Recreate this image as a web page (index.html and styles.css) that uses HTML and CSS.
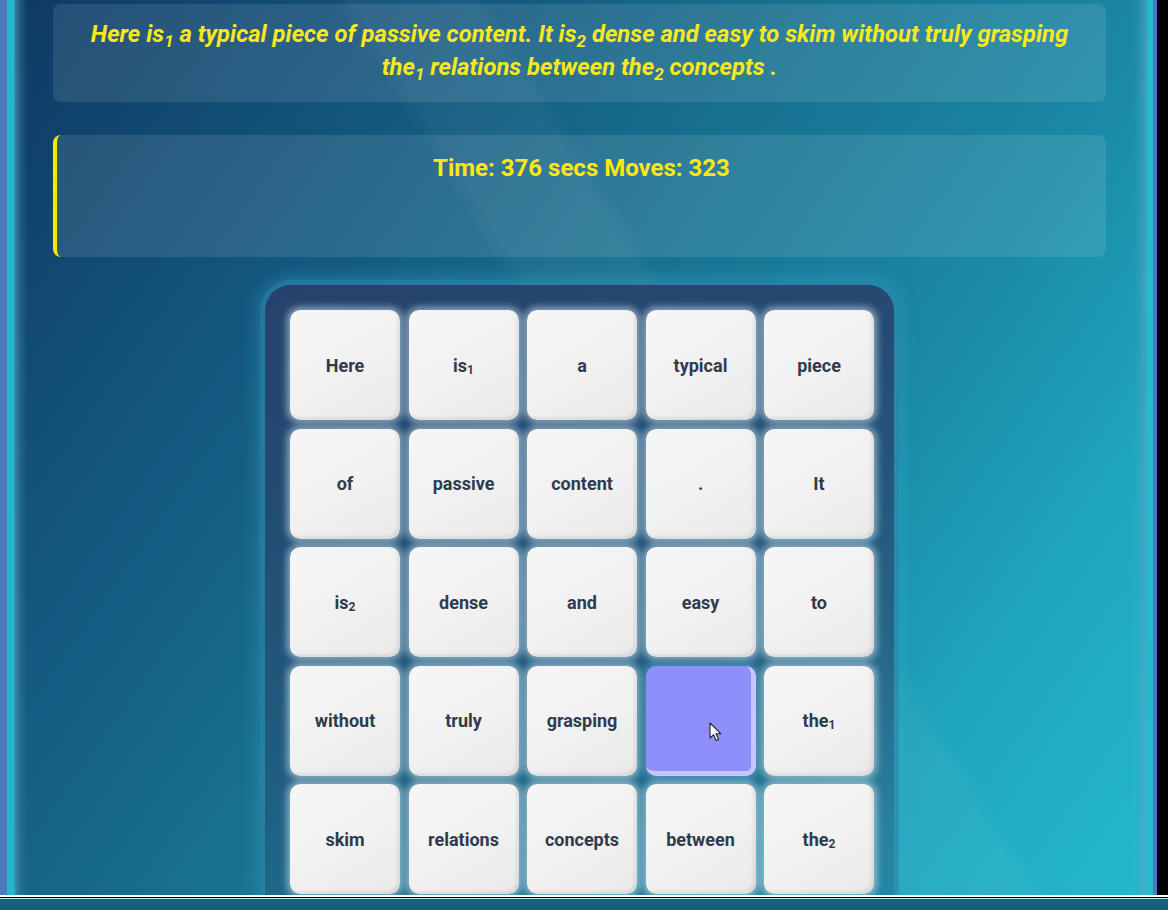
FILE: index.html
```html
<!DOCTYPE html>
<html lang="en">
<head>
<meta charset="utf-8">
<title>Sliding Sentence Puzzle</title>
<link rel="stylesheet" href="styles.css">
</head>
<body>
<div class="frame">
  <div class="window">
    <div class="viewport">
      <div class="content">
        <div class="card sentence">
          <span class="line">Here is<sub>1</sub> a typical piece of passive content. It is<sub>2</sub> dense and easy to skim without truly grasping</span>
          <span class="line">the<sub>1</sub> relations between the<sub>2</sub> concepts .</span>
        </div>
        <div class="card stats">
          <div class="stats-line">Time: 376 secs Moves: 323</div>
        </div>
        <div class="board-wrap">
          <div class="board">
            <div class="tile"><span>Here</span></div>
            <div class="tile"><span>is<sub>1</sub></span></div>
            <div class="tile"><span>a</span></div>
            <div class="tile"><span>typical</span></div>
            <div class="tile"><span>piece</span></div>
            <div class="tile"><span>of</span></div>
            <div class="tile"><span>passive</span></div>
            <div class="tile"><span>content</span></div>
            <div class="tile"><span>.</span></div>
            <div class="tile"><span>It</span></div>
            <div class="tile"><span>is<sub>2</sub></span></div>
            <div class="tile"><span>dense</span></div>
            <div class="tile"><span>and</span></div>
            <div class="tile"><span>easy</span></div>
            <div class="tile"><span>to</span></div>
            <div class="tile"><span>without</span></div>
            <div class="tile"><span>truly</span></div>
            <div class="tile"><span>grasping</span></div>
            <div class="tile empty">
              <svg class="cursor" width="13" height="20" viewBox="0 0 13 20"><path d="M1 1 L1 16 L4.6 12.6 L7.2 18.6 L9.6 17.6 L7 11.8 L12 11.8 Z" fill="#fff" stroke="#222" stroke-width="1.1" stroke-linejoin="round"/></svg>
            </div>
            <div class="tile"><span>the<sub>1</sub></span></div>
            <div class="tile"><span>skim</span></div>
            <div class="tile"><span>relations</span></div>
            <div class="tile"><span>concepts</span></div>
            <div class="tile"><span>between</span></div>
            <div class="tile"><span>the<sub>2</sub></span></div>
          </div>
        </div>
      </div>
    </div>
    <div class="blackbar"></div>
  </div>
  <div class="taskbar"></div>
</div>
</body>
</html>
```
FILE: styles.css
```css
* { box-sizing: border-box; }
html, body { margin: 0; padding: 0; }
body {
  width: 1168px;
  height: 910px;
  overflow: hidden;
  font-family: Roboto, "Liberation Sans", Arial, sans-serif;
  background: #000;
}
.frame {
  display: flex;
  flex-direction: column;
  height: 910px;
}
.window {
  flex: 1;
  display: flex;
  min-height: 0;
}
.viewport {
  flex: 1;
  overflow: hidden;
  border-left: 7px solid #4f78be;
  border-right: 4px solid #5672c0;
  background:
    linear-gradient(to right, #20b8cc 0, #20b8cc 7px, rgba(70,150,180,0.75) 8px, rgba(60,130,165,0.35) 14px, rgba(60,130,165,0) 21px),
    linear-gradient(to left, #22bccf 0, #22bccf 5px, rgba(80,170,200,0.7) 6px, rgba(80,170,200,0.3) 12px, rgba(80,170,200,0) 20px),
    linear-gradient(58deg, rgba(255,255,255,0) 0%, rgba(255,255,255,0) 52%, rgba(255,255,255,0.04) 53%, rgba(255,255,255,0.04) 60%, rgba(255,255,255,0) 61%, rgba(255,255,255,0) 100%),
    linear-gradient(125deg, #0e3963 0%, #145a80 28%, #18708f 45%, #1a88a4 65%, #1fa6bd 82%, #24b9cc 100%);
}
.content {
  padding: 4px 47px 0 46px;
}
.card {
  background: rgba(255,255,255,0.1);
  border-radius: 8px;
}
.sentence {
  display: flex;
  flex-direction: column;
  align-items: center;
  padding: 14px 20px 18px;
  color: #f8e81c;
  font-size: 23.8px;
  font-weight: 700;
  font-style: italic;
  line-height: 33px;
  text-align: center;
}
.line {
  white-space: nowrap;
}
.sentence sub {
  font-size: 17px;
  line-height: 0;
  vertical-align: baseline;
  position: relative;
  top: 5px;
}
.stats {
  margin-top: 33px;
  height: 122px;
  border-left: 4px solid #ffe600;
  padding-top: 17px;
  text-align: center;
}
.stats-line {
  color: #ffe90c;
  font-size: 24px;
  font-weight: 700;
  line-height: 33px;
}
.board-wrap {
  display: flex;
  justify-content: center;
  margin-top: 28px;
}
.board {
  display: grid;
  grid-template-columns: repeat(5, 110px);
  grid-auto-rows: 110px;
  gap: 8.5px;
  padding: 25px 20px 25px 25px;
  border-radius: 26px;
  background: linear-gradient(180deg, rgba(40,62,105,0.85) 0%, rgba(40,70,110,0.6) 60%, rgba(40,80,120,0.35) 100%);
  box-shadow: 0 0 0 5px rgba(40,130,165,0.55), 0 0 16px 8px rgba(60,170,200,0.35);
}
.tile {
  position: relative;
  display: flex;
  align-items: center;
  justify-content: center;
  border-radius: 10px;
  background: linear-gradient(150deg, #f6f6f6 0%, #f1f1f1 55%, #e9e9e9 100%);
  box-shadow: 0 0 7px 3px rgba(220,240,248,0.55), inset -3px -3px 3px rgba(0,0,0,0.07);
  color: #2f3b4d;
  font-size: 18px;
  font-weight: 700;
}
.tile sub {
  font-size: 12px;
  line-height: 0;
  vertical-align: -2px;
}
.tile.empty {
  background: #8f8ffb;
  border-right: 5px solid #c6c6ff;
  border-bottom: 5px solid #c6c6ff;
  box-shadow: 0 0 7px 3px rgba(120,190,230,0.45);
}
.cursor {
  position: absolute;
  left: 63px;
  top: 56px;
}
.blackbar {
  width: 11px;
  background: #000;
}
.taskbar {
  height: 15px;
  border-top: 2px solid #ffffff;
  background: linear-gradient(180deg, #000 0, #000 1px, #cfe8e0 1px, #cfe8e0 2px, #175f80 2px);
}
```
